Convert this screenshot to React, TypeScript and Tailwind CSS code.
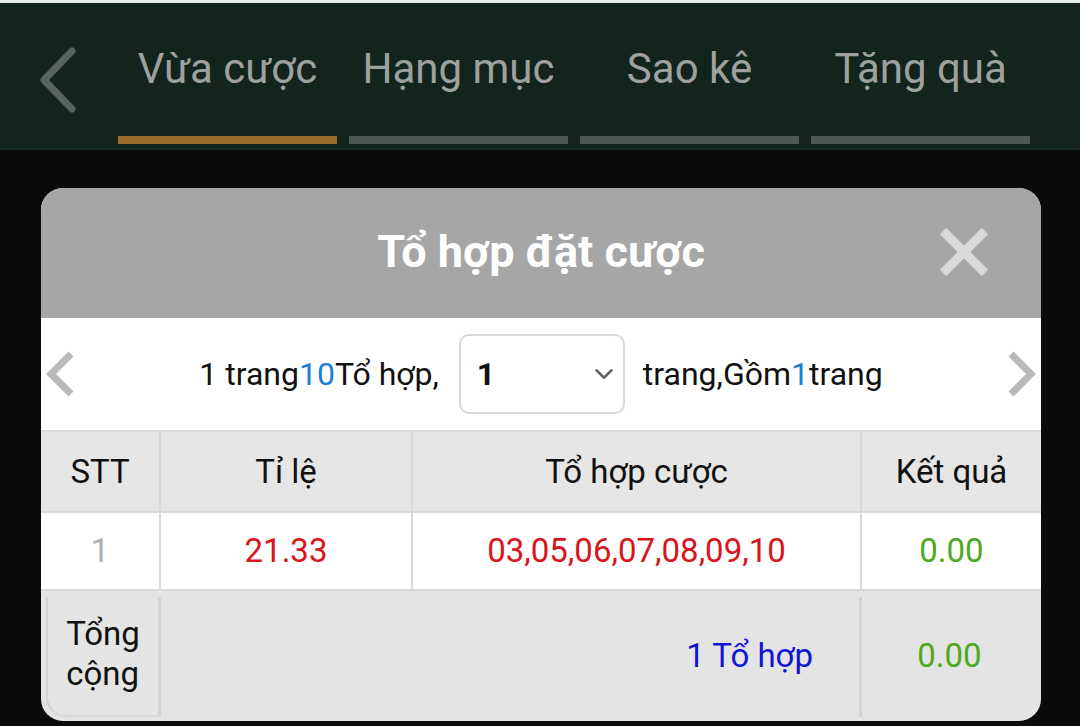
import { ChevronDown } from "lucide-react";

const tabs = ["Vừa cược", "Hạng mục", "Sao kê", "Tặng quà"];

function BackArrow() {
  return (
    <svg width="44" height="72" viewBox="0 0 44 72" className="shrink-0">
      <path
        d="M36 5 L8 34 L36 63"
        fill="none"
        stroke="#56665e"
        strokeWidth="7"
        strokeLinecap="round"
        strokeLinejoin="round"
      />
    </svg>
  );
}

function PagerArrow({ dir }: { dir: "left" | "right" }) {
  const d = dir === "left" ? "M26 4 L6 24 L26 44" : "M6 4 L26 24 L6 44";
  return (
    <svg width="32" height="48" viewBox="0 0 32 48">
      <path d={d} fill="none" stroke="#b9b9b9" strokeWidth="7" strokeLinejoin="miter" />
    </svg>
  );
}

function CloseIcon() {
  return (
    <svg width="52" height="52" viewBox="0 0 52 52">
      <path d="M5 5 L47 47 M47 5 L5 47" stroke="#dadada" strokeWidth="9" />
    </svg>
  );
}

export default function App() {
  return (
    <div
      className="w-[1080px] h-[726px] overflow-hidden bg-[#0b0b0b] flex flex-col"
      style={{ fontFamily: "Roboto, 'Noto Sans', sans-serif" }}
    >
      <div className="h-[3px] bg-[#e9ebea]" />
      {/* top tab bar */}
      <div className="h-[147px] bg-[#13241d] flex items-start pl-[36px] border-b-[1px] border-[#1c2622]">
        <div className="pt-[43px]">
          <BackArrow />
        </div>
        <div className="flex gap-[12px] ml-[38px]">
          {tabs.map((t, i) => (
            <div key={t} className="w-[219px] flex flex-col items-center">
              <div className="h-[133px] flex items-center pb-[2px] text-[42px] text-[#9da19f]">
                {t}
              </div>
              <div
                className={
                  i === 0 ? "h-[8px] w-full bg-[#9a6d2c]" : "h-[8px] w-full bg-[#4b5952]"
                }
              />
            </div>
          ))}
        </div>
      </div>

      {/* modal */}
      <div className="mt-[38px] mx-[41px] w-[1000px] rounded-[22px] overflow-hidden bg-[#e4e4e4] flex flex-col">
        <div className="relative h-[130px] bg-[#a6a6a6] flex items-center justify-center">
          <span className="text-[45px] font-bold text-white pb-[2px]">Tổ hợp đặt cược</span>
          <div className="absolute right-[51px] top-[38px]">
            <CloseIcon />
          </div>
        </div>

        {/* pager */}
        <div className="h-[112px] bg-white flex items-center justify-between px-[4px]">
          <PagerArrow dir="left" />
          <div className="flex items-center text-[32px] text-[#111]">
            <span>
              1 trang<span className="text-[#1a7fd6]">10</span>Tổ hợp,
            </span>
            <div className="ml-[20px] mr-[18px] w-[166px] h-[80px] border-2 border-[#d8d8d8] rounded-[10px] flex items-center justify-between pl-[16px] pr-[4px]">
              <span className="font-bold">1</span>
              <ChevronDown size={30} strokeWidth={2} color="#666" />
            </div>
            <span>
              trang,Gồm<span className="text-[#1a7fd6]">1</span>trang
            </span>
          </div>
          <PagerArrow dir="right" />
        </div>

        {/* header row */}
        <div className="grid grid-cols-[120px_252px_449px_179px] h-[81px] bg-[#e6e6e6] border-t-2 border-[#d9d9d9] text-[33px] text-[#111]">
          <div className="flex items-center justify-center border-r-2 border-[#d9d9d9]">STT</div>
          <div className="flex items-center justify-center border-r-2 border-[#d9d9d9]">Tỉ lệ</div>
          <div className="flex items-center justify-center border-r-2 border-[#d9d9d9]">Tổ hợp cược</div>
          <div className="flex items-center justify-center">Kết quả</div>
        </div>

        {/* data row */}
        <div className="grid grid-cols-[120px_252px_449px_179px] h-[80px] bg-white border-t-2 border-b-2 border-[#d9d9d9] text-[33px]">
          <div className="flex items-center justify-center border-r-2 border-[#d9d9d9] text-[#b0b0b0]">1</div>
          <div className="flex items-center justify-center border-r-2 border-[#d9d9d9] text-[#d9141c]">21.33</div>
          <div className="flex items-center justify-center border-r-2 border-[#d9d9d9] text-[#d9141c]">
            03,05,06,07,08,09,10
          </div>
          <div className="flex items-center justify-center text-[#4fa81d]">0.00</div>
        </div>

        {/* total row */}
        <div className="h-[130px] pt-[6px] pb-[4px] pl-[5px] flex text-[33px]">
          <div className="w-[115px] flex items-center justify-center border-l-2 border-b-2 border-r-[3px] border-l-[#d3d3d3] border-b-[#d8d8d8] border-r-[#d3d3d3] rounded-bl-[20px] leading-[40px] text-[#111] pb-[4px]">
            <span className="text-left">
              Tổng
              <br />
              cộng
            </span>
          </div>
          <div className="w-[701px] flex items-center justify-end pr-[46px] border-r-[3px] border-[#d3d3d3] text-[#1414d6] pb-[2px]">
            1 Tổ hợp
          </div>
          <div className="flex-1 flex items-center justify-center text-[#4fa81d] pb-[2px] pr-[4px]">0.00</div>
        </div>
      </div>
    </div>
  );
}
